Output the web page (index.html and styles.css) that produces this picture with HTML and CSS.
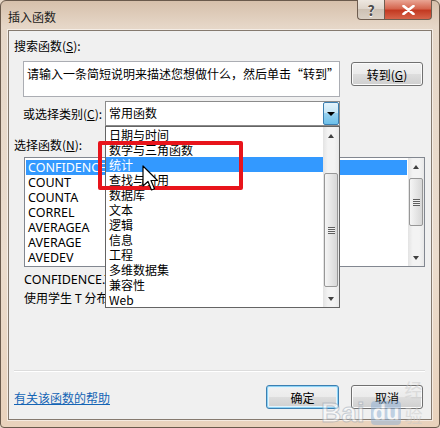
FILE: index.html
```html
<!DOCTYPE html>
<html lang="zh-CN">
<head>
    <meta charset="UTF-8">
    <title>插入函数</title>
    <link rel="stylesheet" href="styles.css">
</head>
<body>

<div class="window">
    <div class="titlebar">
        <span class="title">插入函数</span>
        <div class="caption-buttons">
            <span class="cap-btn help">?</span>
            <span class="cap-btn close">
                <svg width="13" height="10" viewBox="0 0 13 10"><path d="M1.5 1 L11.5 9 M11.5 1 L1.5 9" stroke="#fff" stroke-width="2.6" stroke-linecap="round"/></svg>
            </span>
        </div>
    </div>

    <div class="client">
        <div class="label label-search">搜索函数(<u>S</u>):</div>
        <div class="search-row">
            <div class="search-box">请输入一条简短说明来描述您想做什么，然后单击“转到”</div>
            <button class="btn go">转到(<u>G</u>)</button>
        </div>

        <div class="category-row">
            <span class="cat-label">或选择类别(<u>C</u>):</span>
            <div class="combo">
                <span class="combo-text">常用函数</span>
                <span class="combo-btn"><span class="arrow-down"></span></span>

                <!-- opened drop-down list -->
                <div class="dropdown">
                    <ul class="items">
                        <li>日期与时间</li>
                        <li>数学与三角函数</li>
                        <li class="sel">统计</li>
                        <li>查找与引用</li>
                        <li>数据库</li>
                        <li>文本</li>
                        <li>逻辑</li>
                        <li>信息</li>
                        <li>工程</li>
                        <li>多维数据集</li>
                        <li>兼容性</li>
                        <li>Web</li>
                    </ul>
                    <div class="vscroll drop-scroll">
                        <div class="sb-arrow"><span class="tri-up"></span></div>
                        <div class="sb-track"><div class="thumb"><span class="grip"></span></div></div>
                        <div class="sb-arrow"><span class="tri-down"></span></div>
                    </div>
                </div>
            </div>
        </div>

        <div class="label label-fn">选择函数(<u>N</u>):</div>
        <div class="listbox">
            <ul class="items">
                <li class="sel">CONFIDENCE.T</li>
                <li>COUNT</li>
                <li>COUNTA</li>
                <li>CORREL</li>
                <li>AVERAGEA</li>
                <li>AVERAGE</li>
                <li>AVEDEV</li>
            </ul>
            <div class="vscroll list-scroll">
                <div class="sb-arrow"><span class="tri-up"></span></div>
                <div class="sb-track"><div class="thumb"><span class="grip"></span></div></div>
                <div class="sb-arrow"><span class="tri-down"></span></div>
            </div>
        </div>

        <div class="desc">
            <div class="desc-syntax">CONFIDENCE.T(alpha,standard_dev,size)</div>
            <div>使用学生 T 分布，返回总体平均值的置信区间</div>
        </div>

        <div class="separator"></div>

        <div class="bottom-row">
            <a class="help-link" href="#">有关该函数的帮助</a>
            <div class="buttons">
                <button class="btn default">确定</button>
                <button class="btn">取消</button>
            </div>
        </div>

        <!-- annotation on top of the screenshot -->
        <div class="mark-box"></div>
        <svg class="cursor" width="17" height="27" viewBox="0 0 17 27">
            <path d="M1 1 L1 21 L6 16.5 L9.5 25 L12.5 23.8 L9 15.5 L15.5 15.5 Z" fill="#fff" stroke="#000" stroke-width="1.2" stroke-linejoin="round"/>
        </svg>

        <div class="watermark">
            <span class="wm-bai">Bai</span>
            <span class="wm-du">du</span>
            <span class="wm-jy">经验</span>
        </div>
    </div>
</div>

</body>
</html>
```

FILE: styles.css
```css
* { box-sizing: border-box; }
body { margin: 0; font-family: "Noto Sans CJK SC", "Noto Sans", sans-serif; font-size: 12px; color: #000; background: #e8d8c8; }

.window { width: 440px; height: 428px; padding: 0 7px 7px; border: 1px solid #6a5a4c; border-radius: 6px 6px 4px 4px;
    background: linear-gradient(#d6c0ab, #e6d7c8 26px, #ebdccd 60%, #e9d2bc); }

.titlebar { height: 29px; display: flex; justify-content: space-between; align-items: flex-start; }
.title { margin-top: 8px; line-height: 15px; color: #1c1c1c; }
.caption-buttons { display: flex; margin-top: -1px; }
.cap-btn { height: 20px; display: flex; align-items: center; justify-content: center; border: 1px solid #6e5d50; border-top: none; }
.help { width: 27px; border-radius: 0 0 0 4px; border-right: none; font-weight: bold; font-size: 14px; color: #4a4a4a;
    background: linear-gradient(#eee8e1, #ddd3c9 50%, #cdc1b4 50%, #d9cfc4); text-shadow: 0 1px 0 #fff; }
.close { width: 48px; border-radius: 0 0 4px 0; background: linear-gradient(#e9a594, #d5664f 45%, #c33a22 55%, #d6644a); }

.client { position: relative; height: 390px; border: 1px solid #857a6f; background: #f0f0f0;
    box-shadow: 0 0 0 1px rgba(255, 255, 255, 0.55); }

.label { line-height: 15px; margin-left: 5px; }
.label-search { margin-top: 7px; }

.search-row { display: flex; margin: 8px 0 0 14px; }
.search-box { width: 317px; height: 36px; border: 1px solid #abadb3; background: #fff; padding: 4px 3px; line-height: 15px; }

.btn { font: inherit; color: #000; height: 24px; padding: 0; border: 1px solid #707070; border-radius: 3px;
    background: linear-gradient(#f2f2f2, #ebebeb 48%, #dddddd 52%, #cfcfcf);
    box-shadow: inset 0 0 0 1px #fbfbfb; }
.btn.go { width: 72px; margin: 1px 0 0 11px; }
.btn.default { width: 73px; border-color: #3c7fb1; box-shadow: inset 0 0 0 1px #8ed3f5, inset 0 0 0 2px #e4f3fb; }
.buttons { display: flex; gap: 12px; }
.buttons .btn { width: 72px; }
.buttons .btn.default { width: 73px; }

.category-row { display: flex; align-items: center; margin: 4px 0 0 14px; }
.cat-label { width: 82px; line-height: 15px; }
.combo { position: relative; width: 235px; height: 25px; border: 1px solid #8b8b8b; background: #fff; display: flex; }
.combo-text { flex: 1; padding-left: 3px; line-height: 22px; }
.combo-btn { width: 16px; height: 23px; display: flex; align-items: center; justify-content: center; border: 1px solid #3c7fb1; border-radius: 2px;
    background: linear-gradient(#e5f4fc, #c4e5f6 50%, #98d1ef 50%, #6cc0ea); }
.arrow-down { border-left: 4px solid transparent; border-right: 4px solid transparent; border-top: 4px solid #000; }

.dropdown { position: absolute; left: -1px; top: 24px; width: 235px; height: 182px; border: 1px solid #646464; background: #fff; display: flex; z-index: 2; }
.items { flex: 1; list-style: none; margin: 0; padding: 0; }
.items li { height: 15px; line-height: 15px; padding-left: 3px; white-space: nowrap; overflow: hidden; }
.items li.sel { background: #3399ff; color: #fff; }

.vscroll { width: 16px; display: flex; flex-direction: column; background: linear-gradient(to right, #e3e3e3, #f3f3f3 30%, #f3f3f3 70%, #e8e8e8); }
.sb-arrow { height: 17px; display: flex; align-items: center; justify-content: center; }
.sb-track { flex: 1; }
.thumb { margin: 0 1px; border: 1px solid #979797; border-radius: 2px; display: flex; align-items: center; justify-content: center;
    background: linear-gradient(to right, #f5f5f5, #e6e6e6 50%, #d7d7d7); }
.grip { width: 7px; height: 7px; background: repeating-linear-gradient(#5f5f5f 0 1px, #f0f0f0 1px 2px); }
.drop-scroll .thumb { margin-top: 29px; height: 114px; }
.list-scroll .thumb { margin-top: 3px; height: 48px; }
.tri-up { border-left: 3px solid transparent; border-right: 3px solid transparent; border-bottom: 4px solid #404040; }
.tri-down { border-left: 3px solid transparent; border-right: 3px solid transparent; border-top: 4px solid #404040; }

.label-fn { margin-top: 11px; }
.listbox { display: flex; width: 401px; height: 110px; margin: 5px 0 0 15px; border: 1px solid #828790; background: #fff; }
.listbox .items { padding: 2px 1px 0; }
.listbox .items li { padding-left: 2px; font-family: "Noto Sans", "Noto Sans CJK SC", sans-serif; font-size: 12.5px; }

.desc { margin: 4px 0 0 15px; line-height: 18px; white-space: nowrap; }
.desc-syntax { font-family: "Noto Sans", "Noto Sans CJK SC", sans-serif; font-size: 12.5px; }

.separator { margin: 63px 6px 0 5px; height: 2px; border-top: 1px solid #dcdcdc; border-bottom: 1px solid #fff; }

.bottom-row { display: flex; align-items: center; justify-content: space-between; margin-top: 13px; padding: 0 8px 0 5px; }
.help-link { color: #1565b5; text-decoration: underline; line-height: 15px; }

.mark-box { position: absolute; left: 89px; top: 110px; width: 145px; height: 49px; border: 4px solid #e8141b; border-radius: 2px; z-index: 3; }
.cursor { position: absolute; left: 133px; top: 134px; z-index: 4; }

.watermark { position: absolute; left: 312px; top: 345px; display: flex; align-items: flex-end; pointer-events: none; z-index: 3; opacity: 0.5; }
.wm-bai { font-family: "Liberation Sans", sans-serif; font-size: 28px; font-weight: bold; color: #fff; -webkit-text-stroke: 1px #9aa7b5; line-height: 30px; }
.wm-du { font-family: "Liberation Sans", sans-serif; font-size: 22px; font-weight: bold; color: #fff; background: #8fb1d6; border-radius: 4px; padding: 0 2px; line-height: 24px; margin: 0 3px 3px 6px; }
.wm-jy { font-size: 18px; color: #c9c9c9; line-height: 26px; }
```
